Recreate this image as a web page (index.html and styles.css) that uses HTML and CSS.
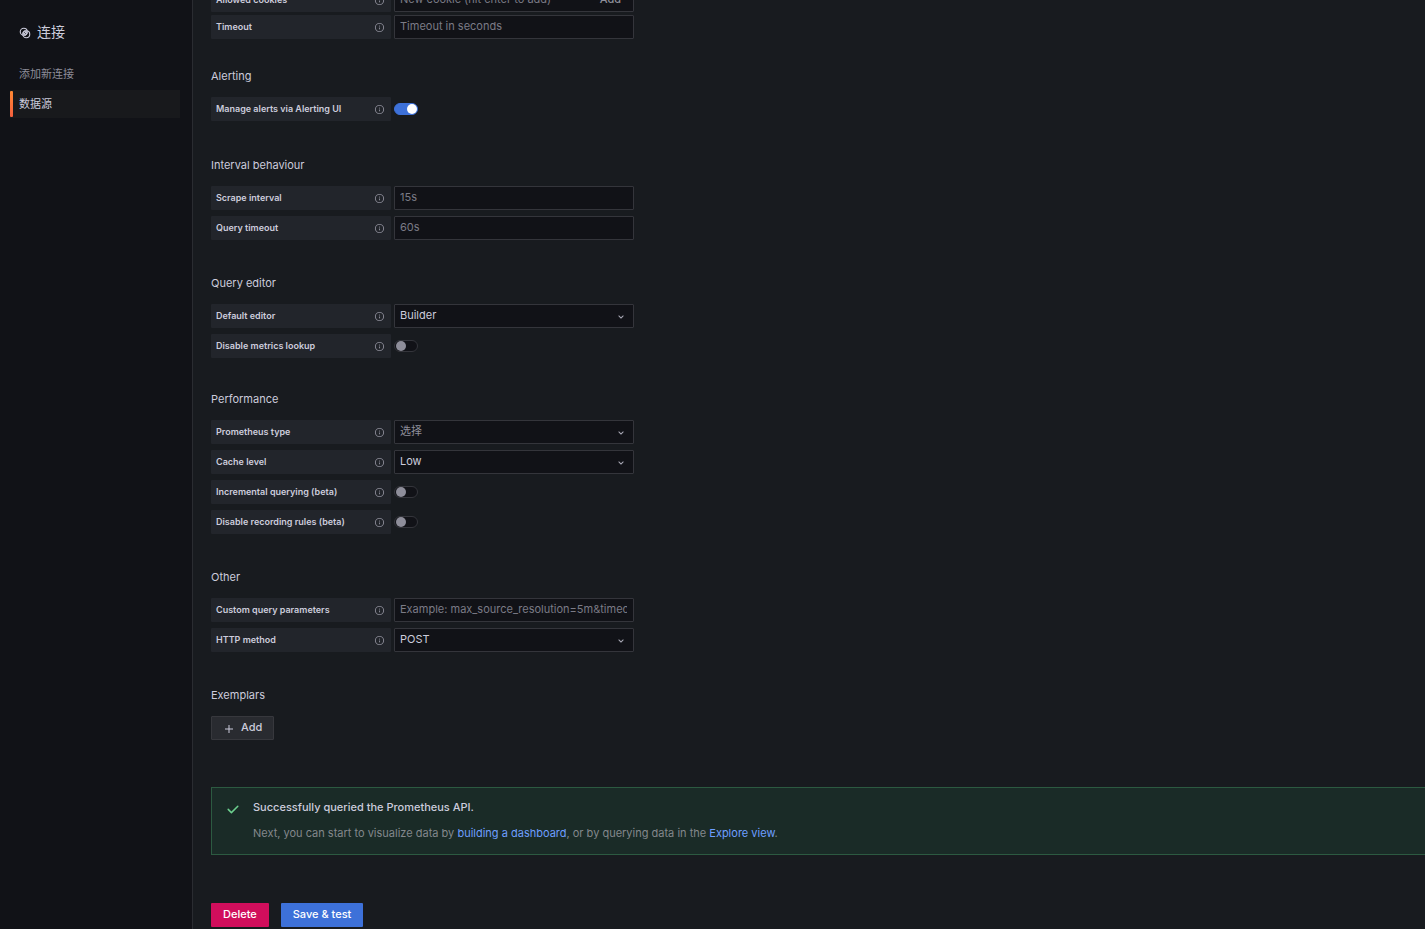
FILE: index.html
```html
<!DOCTYPE html>
<html lang="zh-CN">
<head>
    <meta charset="UTF-8">
    <meta name="viewport" content="width=device-width, initial-scale=1.0">
    <title>数据源 - 连接</title>
    <link rel="stylesheet" href="styles.css">
</head>
<body>
    <svg class="symbols" aria-hidden="true">
        <symbol id="info" viewBox="0 0 24 24">
            <path fill="currentColor" d="M12,2A10,10,0,1,0,22,12,10,10,0,0,0,12,2Zm0,18a8,8,0,1,1,8-8A8,8,0,0,1,12,20Zm0-8.5a1,1,0,0,0-1,1v3a1,1,0,0,0,2,0v-3A1,1,0,0,0,12,11.5Zm0-4a1.25,1.25,0,1,0,1.25,1.25A1.25,1.25,0,0,0,12,7.5Z"/>
        </symbol>
        <symbol id="angle-down" viewBox="0 0 24 24">
            <path fill="currentColor" d="M17,9.17a1,1,0,0,0-1.41,0L12,12.71,8.46,9.17a1,1,0,0,0-1.41,0,1,1,0,0,0,0,1.42l4.24,4.24a1,1,0,0,0,1.42,0L17,10.59A1,1,0,0,0,17,9.17Z"/>
        </symbol>
    </svg>

    <div class="page">
        <nav class="sidebar">
            <h1 class="sidebar-title">
                <svg class="sidebar-icon" viewBox="0 0 24 24" fill="none" stroke="currentColor" stroke-width="2.2">
                    <circle cx="9.5" cy="9.5" r="7"/>
                    <circle cx="14.5" cy="14.5" r="7"/>
                    <rect x="8.5" y="8.5" width="7" height="7" rx="2" transform="rotate(45 12 12)"/>
                    <path d="M9.5 14.5l5-5"/>
                </svg>
                连接
            </h1>
            <a class="sidebar-link" href="#">添加新连接</a>
            <a class="sidebar-link active" href="#">数据源</a>
        </nav>

        <main class="content">
            <form class="settings">
                <section class="group group-http">
                    <div class="row">
                        <label class="row-label" for="cookies">Allowed cookies <svg class="info"><use href="#info"/></svg></label>
                        <div class="field tags-field">
                            <input class="tags-input" id="cookies" type="text" placeholder="New cookie (hit enter to add)">
                            <button class="tags-add" type="button">Add</button>
                        </div>
                    </div>
                    <div class="row">
                        <label class="row-label" for="timeout">Timeout <svg class="info"><use href="#info"/></svg></label>
                        <input class="field" id="timeout" type="text" placeholder="Timeout in seconds">
                    </div>
                </section>

                <section class="group group-alerting">
                    <h2 class="group-title">Alerting</h2>
                    <div class="row">
                        <label class="row-label" for="manageAlerts">Manage alerts via Alerting UI <svg class="info"><use href="#info"/></svg></label>
                        <input class="switch" id="manageAlerts" type="checkbox" checked>
                    </div>
                </section>

                <section class="group">
                    <h2 class="group-title">Interval behaviour</h2>
                    <div class="row">
                        <label class="row-label" for="scrape">Scrape interval <svg class="info"><use href="#info"/></svg></label>
                        <input class="field" id="scrape" type="text" placeholder="15s">
                    </div>
                    <div class="row">
                        <label class="row-label" for="queryTimeout">Query timeout <svg class="info"><use href="#info"/></svg></label>
                        <input class="field" id="queryTimeout" type="text" placeholder="60s">
                    </div>
                </section>

                <section class="group group-editor">
                    <h2 class="group-title">Query editor</h2>
                    <div class="row">
                        <label class="row-label" for="editor">Default editor <svg class="info"><use href="#info"/></svg></label>
                        <div class="select-wrap">
                            <select class="field" id="editor">
                                <option>Builder</option>
                                <option>Code</option>
                            </select>
                            <svg class="arrow"><use href="#angle-down"/></svg>
                        </div>
                    </div>
                    <div class="row">
                        <label class="row-label" for="metricsLookup">Disable metrics lookup <svg class="info"><use href="#info"/></svg></label>
                        <input class="switch" id="metricsLookup" type="checkbox">
                    </div>
                </section>

                <section class="group">
                    <h2 class="group-title">Performance</h2>
                    <div class="row">
                        <label class="row-label" for="promType">Prometheus type <svg class="info"><use href="#info"/></svg></label>
                        <div class="select-wrap">
                            <select class="field empty" id="promType">
                                <option>选择</option>
                                <option>Prometheus</option>
                            </select>
                            <svg class="arrow"><use href="#angle-down"/></svg>
                        </div>
                    </div>
                    <div class="row">
                        <label class="row-label" for="cache">Cache level <svg class="info"><use href="#info"/></svg></label>
                        <div class="select-wrap">
                            <select class="field" id="cache">
                                <option>Low</option>
                                <option>Medium</option>
                                <option>High</option>
                            </select>
                            <svg class="arrow"><use href="#angle-down"/></svg>
                        </div>
                    </div>
                    <div class="row">
                        <label class="row-label" for="incremental">Incremental querying (beta) <svg class="info"><use href="#info"/></svg></label>
                        <input class="switch" id="incremental" type="checkbox">
                    </div>
                    <div class="row">
                        <label class="row-label" for="recording">Disable recording rules (beta) <svg class="info"><use href="#info"/></svg></label>
                        <input class="switch" id="recording" type="checkbox">
                    </div>
                </section>

                <section class="group">
                    <h2 class="group-title">Other</h2>
                    <div class="row">
                        <label class="row-label" for="params">Custom query parameters <svg class="info"><use href="#info"/></svg></label>
                        <input class="field" id="params" type="text" placeholder="Example: max_source_resolution=5m&amp;timeout=10">
                    </div>
                    <div class="row">
                        <label class="row-label" for="method">HTTP method <svg class="info"><use href="#info"/></svg></label>
                        <div class="select-wrap">
                            <select class="field" id="method">
                                <option>POST</option>
                                <option>GET</option>
                            </select>
                            <svg class="arrow"><use href="#angle-down"/></svg>
                        </div>
                    </div>
                </section>

                <section class="group">
                    <h2 class="group-title">Exemplars</h2>
                    <button class="btn btn-secondary" type="button">
                        <svg class="plus" viewBox="0 0 12 12" stroke="currentColor" stroke-width="1"><path d="M6 2v8M2 6h8"/></svg>
                        Add
                    </button>
                </section>

                <div class="alert" role="status">
                    <svg class="check" viewBox="0 0 14 14" fill="none" stroke="currentColor" stroke-width="1.5" stroke-linecap="round" stroke-linejoin="round"><path d="M2.2 7.4l3.2 3.2 6.4-6.4"/></svg>
                    <div class="alert-body">
                        <p class="alert-title">Successfully queried the Prometheus API.</p>
                        <p class="alert-text">Next, you can start to visualize data by <a href="#">building a dashboard</a>, or by querying data in the <a href="#">Explore view</a>.</p>
                    </div>
                </div>

                <div class="actions">
                    <button class="btn btn-danger" type="button">Delete</button>
                    <button class="btn btn-primary" type="submit">Save &amp; test</button>
                </div>
            </form>
        </main>
    </div>
</body>
</html>
```
FILE: styles.css
```css
* {
    box-sizing: border-box;
}
body {
    margin: 0;
    font-family: Inter, "Noto Sans CJK SC", sans-serif;
    font-size: 11px;
    line-height: 16px;
    color: #ccccdc;
    background-color: #181b1f;
}
h1, h2, p {
    margin: 0;
    font-weight: 400;
}
input, select, button {
    font: inherit;
    color: inherit;
}
a {
    color: #6e9fff;
    text-decoration: none;
}
.symbols {
    display: none;
}
.page {
    display: flex;
    height: 100vh;
    overflow: hidden;
}

/* sidebar */
.sidebar {
    flex: none;
    width: 193px;
    padding: 22px 12px 0 10px;
    background-color: #111217;
    border-right: 1px solid #2a2c31;
}
.sidebar-title {
    display: flex;
    align-items: center;
    gap: 6px;
    padding-left: 9px;
    margin-bottom: 18px;
    font-size: 14px;
    line-height: 20px;
}
.sidebar-icon {
    width: 12px;
    height: 12px;
    margin-top: 2px;
}
.sidebar-link {
    display: flex;
    align-items: center;
    height: 28px;
    margin-bottom: 2px;
    padding-left: 9px;
    color: #8e8e9a;
}
.sidebar-link.active {
    color: #ccccdc;
    padding-left: 0;
    gap: 6px;
    background-color: #18191c;
}
.sidebar-link.active::before {
    content: "";
    width: 3px;
    height: 26px;
    border-radius: 1px;
    background-image: linear-gradient(#ff8833, #f55f3e);
}

/* settings form */
.content {
    flex: 1;
    min-width: 0;
    padding-left: 18px;
}
.settings {
    margin-top: -12px;
}
.group {
    display: flex;
    flex-direction: column;
    align-items: flex-start;
    gap: 6px;
    margin-bottom: 34px;
}
.group-http {
    gap: 3px;
    margin-bottom: 28px;
}
.group-alerting {
    margin-bottom: 35px;
}
.group-editor {
    margin-bottom: 32px;
}
.group-title {
    margin-bottom: 6px;
    font-size: 11px;
    line-height: 18px;
}
.row {
    display: flex;
    align-items: center;
    gap: 3px;
    height: 24px;
}
.row-label {
    display: flex;
    align-items: center;
    justify-content: space-between;
    width: 180px;
    height: 24px;
    padding: 0 6px 0 5px;
    border-radius: 1px;
    background-color: #22252b;
    font-size: 9px;
    font-weight: 600;
}
.info {
    width: 11px;
    height: 11px;
    color: #8e8e9a;
}
.field {
    width: 240px;
    height: 24px;
    padding: 0 6px 2px 5px;
    border: 1px solid #34353b;
    border-radius: 1px;
    background-color: #111217;
    appearance: none;
    outline: none;
}
select.field {
    padding-bottom: 3px;
}
.field::placeholder, .tags-input::placeholder {
    color: #7b7b86;
    opacity: 1;
}
.field.empty {
    color: #8e8e9a;
}
.tags-field {
    display: flex;
    align-items: center;
}
.tags-input {
    flex: 1;
    min-width: 0;
    padding: 0;
    border: none;
    background: none;
    outline: none;
}
.tags-add {
    padding: 0 6px;
    border: none;
    background: none;
    color: #8e8e9a;
    font-weight: 500;
}
.select-wrap {
    position: relative;
}
.arrow {
    position: absolute;
    top: 7px;
    right: 7px;
    width: 12px;
    height: 12px;
    color: #a9a9b6;
    pointer-events: none;
}
.switch {
    display: flex;
    align-items: center;
    width: 24px;
    height: 12px;
    margin: 0;
    padding: 0 1px;
    border: 1px solid #34353b;
    border-radius: 6px;
    background-color: #111217;
    appearance: none;
}
.switch::before {
    content: "";
    width: 10px;
    height: 10px;
    border-radius: 50%;
    background-color: #8e8e9a;
}
.switch:checked {
    justify-content: flex-end;
    padding: 0;
    border-color: #3d71d9;
    background-color: #3d71d9;
}
.switch:checked::before {
    background-color: #ffffff;
}

/* buttons */
.btn {
    display: flex;
    align-items: center;
    height: 24px;
    padding: 0 12px 2px;
    border: none;
    border-radius: 1px;
    font-weight: 500;
}
.btn-secondary {
    gap: 6px;
    padding: 0 11px 2px;
    border: 1px solid #37383d;
    background-color: #292b30;
}
.btn-danger {
    background-color: #d10e5c;
    color: #ffffff;
}
.btn-primary {
    background-color: #3d71d9;
    color: #ffffff;
}
.plus {
    width: 12px;
    height: 12px;
    margin-top: 3px;
}
.actions {
    display: flex;
    gap: 12px;
}

/* result message */
.alert {
    display: flex;
    gap: 13px;
    margin: 47px 0 48px;
    padding: 11px 0 13px 14px;
    border: 1px solid #2c5a41;
    border-right: none;
    background-color: #1a2b27;
}
.check {
    width: 14px;
    height: 14px;
    margin-top: 3px;
    color: #6ccf8e;
}
.alert-title {
    margin-bottom: 10px;
    font-weight: 500;
}
.alert-text {
    color: #83888c;
}
```
